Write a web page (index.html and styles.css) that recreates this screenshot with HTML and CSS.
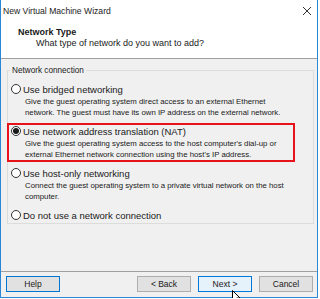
FILE: index.html
```html
<!DOCTYPE html>
<html lang="en">
<head>
    <meta charset="UTF-8">
    <meta name="viewport" content="width=device-width, initial-scale=1.0">
    <title>New Virtual Machine Wizard</title>
    <link rel="stylesheet" href="styles.css">
</head>
<body>
    <div class="window">
        <div class="titlebar">
            <span class="title">New Virtual Machine Wizard</span>
            <svg class="close" width="10" height="10" viewBox="0 0 10 10">
                <path d="M1 1 L9 9 M9 1 L1 9" stroke="#333" stroke-width="1" fill="none"/>
            </svg>
        </div>

        <div class="header">
            <h1 class="header-title">Network Type</h1>
            <p class="header-subtitle">What type of network do you want to add?</p>
        </div>

        <div class="content">
            <fieldset class="group">
                <legend>Network connection</legend>

                <div class="option">
                    <div class="option-label"><span class="radio"></span>Use bridged networking</div>
                    <p class="option-desc">Give the guest operating system direct access to an external Ethernet<br>network. The guest must have its own IP address on the external network.</p>
                </div>

                <div class="option selected">
                    <div class="option-label"><span class="radio checked"></span>Use network address translation (NAT)</div>
                    <p class="option-desc">Give the guest operating system access to the host computer's dial-up or<br>external Ethernet network connection using the host's IP address.</p>
                </div>

                <div class="option">
                    <div class="option-label"><span class="radio"></span>Use host-only networking</div>
                    <p class="option-desc">Connect the guest operating system to a private virtual network on the host<br>computer.</p>
                </div>

                <div class="option">
                    <div class="option-label"><span class="radio"></span>Do not use a network connection</div>
                </div>
            </fieldset>
        </div>

        <div class="footer">
            <button class="btn btn-help">Help</button>
            <button class="btn">&lt; Back</button>
            <button class="btn btn-next">Next &gt;</button>
            <button class="btn">Cancel</button>
            <svg class="cursor" width="9" height="13" viewBox="0 0 9 13">
                <path d="M0.5 0.5 L0.5 11 L3 8.5 L5 12.5 L6.5 11.8 L4.6 8 L8 8 Z" fill="#fff" stroke="#000" stroke-width="1"/>
            </svg>
        </div>
    </div>
</body>
</html>
```

FILE: styles.css
```css
* {
    margin: 0;
    padding: 0;
    box-sizing: border-box;
}

body {
    font-family: "Liberation Sans", Arial, sans-serif;
    font-size: 9px;
    color: #1a1a1a;
    background: #ffffff;
}

.window {
    width: 318px;
    height: 298px;
    display: flex;
    flex-direction: column;
    background: #f0f0f0;
    border-left: 1px solid #2a86d6;
    border-right: 1px solid #2a86d6;
    border-bottom: 1px solid #2a86d6;
}

.titlebar {
    height: 21px;
    flex-shrink: 0;
    background: #ffffff;
    display: flex;
    align-items: center;
    justify-content: space-between;
    padding: 1px 5px 0 2px;
}

.title {
    font-size: 8.6px;
    color: #222;
}

.header {
    height: 38px;
    flex-shrink: 0;
    background: #ffffff;
    border-bottom: 1px solid #a0a0a0;
    padding: 6px 0 0 17px;
}

.header-title {
    font-size: 9px;
    font-weight: 700;
    line-height: 11px;
}

.header-subtitle {
    line-height: 11px;
    padding-left: 18px;
}

.content {
    flex: 1;
    padding: 6px 3px 0 6px;
}

.group {
    border: 1px solid #dcdcdc;
    padding: 7px 0 2px 0;
}

.group legend {
    margin-left: 2px;
    padding: 0 2px;
    font-size: 8.2px;
    line-height: 11px;
}

.option {
    margin: 0 20px 7px 0;
    padding-left: 3px;
}

.option:last-child {
    margin-bottom: 0;
}

.option.selected {
    outline: 2px solid #e8121b;
    margin-left: 1px;
    padding-left: 2px;
}

.option-label {
    height: 12px;
    display: flex;
    align-items: center;
    font-size: 9.5px;
}

.radio {
    width: 10px;
    height: 10px;
    border: 1px solid #333;
    border-radius: 50%;
    background: #fff;
    margin-right: 2px;
    display: flex;
    align-items: center;
    justify-content: center;
}

.radio.checked::after {
    content: "";
    width: 6px;
    height: 6px;
    border-radius: 50%;
    background: #1a1a1a;
}

.option-desc {
    margin-top: 1px;
    font-size: 7.8px;
    line-height: 11px;
    padding-left: 14px;
    white-space: nowrap;
}

.footer {
    position: relative;
    height: 26px;
    flex-shrink: 0;
    border-top: 1px solid #a0a0a0;
    display: flex;
    align-items: center;
    gap: 7px;
    padding: 0 4px 2px 5px;
}

.btn {
    width: 54px;
    height: 16px;
    font-family: inherit;
    font-size: 8.5px;
    color: #1a1a1a;
    background: #e1e1e1;
    border: 1px solid #adadad;
}

.btn-help {
    border-color: #0078d7;
    margin-right: auto;
}

.btn-next {
    background: #e5f1fb;
    border-color: #0078d7;
}

.cursor {
    position: absolute;
    left: 231px;
    top: 18px;
}
```
